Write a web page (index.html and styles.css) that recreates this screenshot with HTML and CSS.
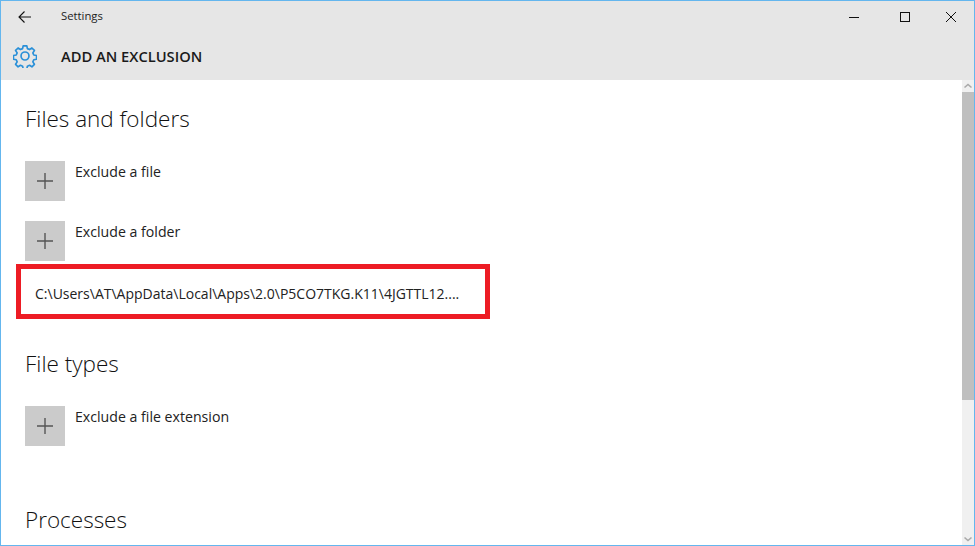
FILE: index.html
```html
<!DOCTYPE html>
<html lang="en">
<head>
<meta charset="utf-8">
<title>Settings</title>
<link rel="stylesheet" href="styles.css">
</head>
<body>
<div class="window">
  <header class="header">
    <div class="titlebar">
      <button class="back" aria-label="Back">
        <svg width="16" height="14" viewBox="0 0 16 14"><path d="M14 7H2M7.500 1.500 2 7l5.500 5.500" fill="none" stroke="#111" stroke-width="1.100"/></svg>
      </button>
      <span class="app-title">Settings</span>
      <div class="controls">
        <svg class="ctl" width="46" height="12" viewBox="0 0 46 12"><path d="M13 6.500h10" stroke="#111" stroke-width="1"/></svg>
        <svg class="ctl" width="46" height="12" viewBox="0 0 46 12"><rect x="18.500" y="1.500" width="9" height="9" fill="none" stroke="#111" stroke-width="1"/></svg>
        <svg class="ctl" width="46" height="12" viewBox="0 0 46 12"><path d="M18 1l10 10M28 1 18 11" stroke="#111" stroke-width="1"/></svg>
      </div>
    </div>
    <div class="pagebar">
      <svg class="gear" width="24" height="24" viewBox="0 0 26 26"><path d="M11 2h4l.6 3 2.300 1 2.600-1.700 2.700 2.700-1.700 2.600 1 2.300 3 .6v4l-3 .6-1 2.300 1.700 2.600-2.700 2.700-2.600-1.700-2.300 1-.6 3h-4l-.6-3-2.300-1-2.600 1.700-2.700-2.700 1.700-2.600-1-2.300-3-.6v-4l3-.6 1-2.300-1.700-2.600 2.700-2.700 2.600 1.700 2.300-1z" fill="none" stroke="#2a90d8" stroke-width="1.800" stroke-linejoin="round"/><circle cx="13" cy="13" r="4.300" fill="none" stroke="#2a90d8" stroke-width="1.800"/></svg>
      <h1 class="page-title">ADD AN EXCLUSION</h1>
    </div>
  </header>
  <div class="body">
    <main class="content">
      <h2 class="section first">Files and folders</h2>
      <div class="add-row">
        <span class="plus"><svg width="20" height="20" viewBox="0 0 20 20"><path d="M10 2v16M2 10h16" stroke="#555" stroke-width="1.400"/></svg></span>
        <span class="add-label">Exclude a file</span>
      </div>
      <div class="add-row">
        <span class="plus"><svg width="20" height="20" viewBox="0 0 20 20"><path d="M10 2v16M2 10h16" stroke="#555" stroke-width="1.400"/></svg></span>
        <span class="add-label">Exclude a folder</span>
      </div>
      <div class="path-item">C:\Users\AT\AppData\Local\Apps\2.0\P5CO7TKG.K11\4JGTTL12....</div>
      <h2 class="section types">File types</h2>
      <div class="add-row">
        <span class="plus"><svg width="20" height="20" viewBox="0 0 20 20"><path d="M10 2v16M2 10h16" stroke="#555" stroke-width="1.400"/></svg></span>
        <span class="add-label">Exclude a file extension</span>
      </div>
      <h2 class="section processes">Processes</h2>
    </main>
    <div class="scrollbar">
      <svg class="arrow" width="12" height="12" viewBox="0 0 12 12"><path d="M2.500 7.500 6 4.500l3.500 3" fill="none" stroke="#aaa" stroke-width="1.600"/></svg>
      <div class="thumb"></div>
      <div class="track"></div>
      <svg class="arrow" width="12" height="12" viewBox="0 0 12 12"><path d="M2.500 4.500 6 7.500l3.500-3" fill="none" stroke="#aaa" stroke-width="1.600"/></svg>
    </div>
  </div>
</div>
</body>
</html>
```
FILE: styles.css
```css
* { box-sizing: border-box; }
html, body { margin: 0; padding: 0; }
body { width: 975px; height: 546px; overflow: hidden; font-family: "Open Sans", "Noto Sans", sans-serif; color: #1a1a1a; }
.window { width: 975px; height: 546px; border: 1px solid #64b6ee; display: flex; flex-direction: column; background: #fff; }
.header { height: 79px; background: #e6e6e6; flex: none; }
.titlebar { height: 31px; display: flex; align-items: center; }
.back { width: 48px; height: 31px; padding: 0 0 0 16px; border: 0; background: none; display: flex; align-items: center; }
.app-title { margin: -2px 0 0 12px; font-size: 11.300px; color: #222; }
.controls { margin-left: auto; display: flex; padding-right: 0; }
.ctl { display: block; }
.pagebar { height: 48px; display: flex; align-items: center; padding-left: 12px; }
.gear { flex: none; }
.page-title { margin: 0 0 0 24px; font-size: 14.700px; font-weight: 600; color: #1a1a1a; }
.body { flex: 1; display: flex; min-height: 0; }
.content { flex: 1; padding-left: 24px; overflow: hidden; }
.section { margin: 0; font-size: 22.500px; font-weight: 300; line-height: 28px; color: #111; }
.first { margin-top: 25px; margin-bottom: 28px; }
.types { margin-top: 31px; margin-bottom: 28px; }
.processes { margin-top: 60px; }
.add-row { display: flex; height: 40px; margin-bottom: 20px; }
.plus { width: 40px; height: 40px; background: #cbcbcb; display: flex; align-items: center; justify-content: center; }
.add-label { margin: 1px 0 0 10px; font-size: 14.150px; line-height: 20px; color: #222; }
.path-item { width: 474px; height: 55px; margin: -17px 0 0 -9px; border: 5px solid #ed1c24; padding: 5px 0 0 14px; font-size: 14px; line-height: 39px; color: #222; white-space: nowrap; }
.scrollbar { width: 12px; flex: none; background: #f0f0f0; display: flex; flex-direction: column; }
.arrow { display: block; flex: none; }
.thumb { height: 308px; background: #bfbfbf; flex: none; }
.track { flex: 1; }
```
